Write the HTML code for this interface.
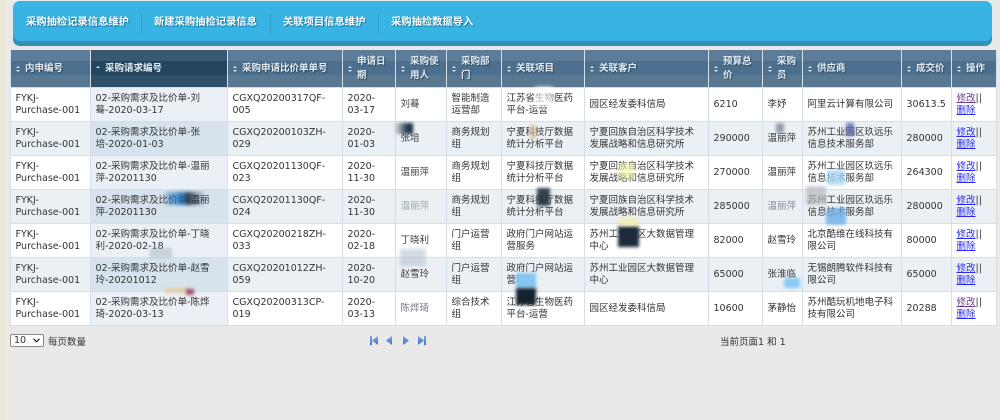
<!DOCTYPE html>
<html><head><meta charset="utf-8"><style>
html,body{margin:0;padding:0;width:1000px;height:420px;overflow:hidden;background:#e9e9e9;font-family:"DejaVu Sans","Noto Sans CJK SC",sans-serif;color:#333}
.strip{position:absolute;left:0;top:0;width:5px;height:420px;background:#ece8d8}
.nav{position:absolute;left:13px;top:1px;width:979px;height:45px;background:#37b3e4;border-radius:7px;box-shadow:inset 0 -5px 0 #3490b5;overflow:hidden}
.nav span{position:absolute;top:14.5px;font-size:10.3px;line-height:13px;font-weight:bold;color:#fff;white-space:nowrap;text-shadow:1px 1px 1px #1d7096;font-family:"Liberation Sans","Noto Sans CJK SC",sans-serif}
.nav b{position:absolute;top:13px;width:1px;height:19px;background:#2d9cc8}
table{position:absolute;left:10px;top:50px;width:986px;border-collapse:collapse;table-layout:fixed;font-size:9.5px;line-height:12.2px;filter:blur(.25px)}
tr:first-child th{height:37px}
th{padding:0 2px 0 14px;border:1px solid #d5dfe9;border-top:0;text-align:left;font-weight:bold;color:#e4ebf1;font-size:9.5px;line-height:13.5px;text-shadow:1px 1px 1px #2c4a62;position:relative;background:linear-gradient(#5c7c99 0,#5c7c99 30%,#4b6f8d 30%,#4b6f8d 68%,#587892 68%,#587892 100%)}
th.s{background:linear-gradient(#365870 0,#365870 30%,#234560 30%,#234560 68%,#2f5069 68%,#2f5069 100%)}
th i{position:absolute;left:5px;top:50%;margin-top:-3px;width:4px;height:6px}
th i:before,th i:after{content:"";position:absolute;left:0;border-left:2px solid transparent;border-right:2px solid transparent}
th i:before{top:0;border-bottom:2px solid #dfe7ee}
th i:after{bottom:0;border-top:2px solid #dfe7ee}
th.s i:after{display:none}
td{height:33px;padding:1px 2px 0 4.5px;border:1px solid #d5dfe9;white-space:nowrap;vertical-align:middle;background:#fff;overflow:hidden;box-sizing:border-box}
tr td{height:34px}
tr.e td{background:#ebf0f5}
td.s{background:#eaf0f5}
tr.e td.s{background:#d7e3ec}
a{color:#2a2aee;text-decoration:underline}
a.v{color:#6a3a9a}
.n{color:#3c3c3c}
.blob{position:absolute;filter:blur(1.5px)}
.sel{position:absolute;left:10px;top:334px;width:34px;height:13px;background:#fff;border:1px solid #8a8a8a;border-radius:2px;box-sizing:border-box;font-size:9.5px;line-height:11px;padding-left:3px}
.sel svg{position:absolute;right:3px;top:3px}
.t{position:absolute;font-size:9.5px;line-height:12px;white-space:nowrap;color:#333}
</style></head><body>
<div class="strip"></div>
<div class="nav">
<span style="left:13px">采购抽检记录信息维护</span><b style="left:128px"></b>
<span style="left:141px">新建采购抽检记录信息</span><b style="left:257px"></b>
<span style="left:270px">关联项目信息维护</span><b style="left:365px"></b>
<span style="left:378px">采购抽检数据导入</span>
</div>
<table>
<colgroup><col style="width:80px"><col style="width:137px"><col style="width:115px"><col style="width:53px"><col style="width:51px"><col style="width:55px"><col style="width:83px"><col style="width:124px"><col style="width:54px"><col style="width:40px"><col style="width:99px"><col style="width:50px"><col style="width:45px"></colgroup>
<tr><th><i></i>内申编号</th><th class="s"><i></i>采购请求编号</th><th><i></i>采购申请比价单单号</th><th><i></i>申请日<br>期</th><th><i></i>采购使<br>用人</th><th><i></i>采购部<br>门</th><th><i></i>关联项目</th><th><i></i>关联客户</th><th><i></i>预算总<br>价</th><th><i></i>采购<br>员</th><th><i></i>供应商</th><th><i></i>成交价</th><th><i></i>操作</th></tr>
<tr><td>FYKJ-<br>Purchase-001</td><td class="s">02-采购需求及比价单-刘<br>蓦-2020-03-17</td><td>CGXQ20200317QF-<br>005</td><td>2020-<br>03-17</td><td class="n">刘蓦</td><td>智能制造<br>运营部</td><td>江苏省生物医药<br>平台-运营</td><td>园区经发委科信局</td><td>6210</td><td>李妤</td><td>阿里云计算有限公司</td><td>30613.5</td><td><a class="v">修改</a>||<br><a>删除</a></td></tr>
<tr class="e"><td>FYKJ-<br>Purchase-001</td><td class="s">02-采购需求及比价单-张<br>培-2020-01-03</td><td>CGXQ20200103ZH-<br>029</td><td>2020-<br>01-03</td><td class="n">张培</td><td>商务规划<br>组</td><td>宁夏科技厅数据<br>统计分析平台</td><td>宁夏回族自治区科学技术<br>发展战略和信息研究所</td><td>290000</td><td>温丽萍</td><td>苏州工业园区玖远乐<br>信息技术服务部</td><td>280000</td><td><a>修改</a>||<br><a>删除</a></td></tr>
<tr><td>FYKJ-<br>Purchase-001</td><td class="s">02-采购需求及比价单-温丽<br>萍-20201130</td><td>CGXQ20201130QF-<br>023</td><td>2020-<br>11-30</td><td class="n">温丽萍</td><td>商务规划<br>组</td><td>宁夏科技厅数据<br>统计分析平台</td><td>宁夏回族自治区科学技术<br>发展战略和信息研究所</td><td>270000</td><td>温丽萍</td><td>苏州工业园区玖远乐<br>信息技术服务部</td><td>264300</td><td><a>修改</a>||<br><a>删除</a></td></tr>
<tr class="e"><td>FYKJ-<br>Purchase-001</td><td class="s">02-采购需求及比价单-温丽<br>萍-20201130</td><td>CGXQ20201130QF-<br>024</td><td>2020-<br>11-30</td><td class="n" style="color:#9aa">温丽萍</td><td>商务规划<br>组</td><td>宁夏科技厅数据<br>统计分析平台</td><td>宁夏回族自治区科学技术<br>发展战略和信息研究所</td><td>285000</td><td style="color:#889">温丽萍</td><td>苏州工业园区玖远乐<br>信息技术服务部</td><td>280000</td><td><a>修改</a>||<br><a>删除</a></td></tr>
<tr><td>FYKJ-<br>Purchase-001</td><td class="s">02-采购需求及比价单-丁晓<br>利-2020-02-18</td><td>CGXQ20200218ZH-<br>033</td><td>2020-<br>02-18</td><td class="n">丁晓利</td><td>门户运营<br>组</td><td>政府门户网站运<br>营服务</td><td>苏州工业园区大数据管理<br>中心</td><td>82000</td><td>赵雪玲</td><td>北京酷维在线科技有<br>限公司</td><td>80000</td><td><a>修改</a>||<br><a>删除</a></td></tr>
<tr class="e"><td>FYKJ-<br>Purchase-001</td><td class="s">02-采购需求及比价单-赵雪<br>玲-20201012</td><td>CGXQ20201012ZH-<br>059</td><td>2020-<br>10-20</td><td class="n">赵雪玲</td><td>门户运营<br>组</td><td>政府门户网站运<br>营服务</td><td>苏州工业园区大数据管理<br>中心</td><td>65000</td><td>张淮临</td><td>无锡朗腾软件科技有<br>限公司</td><td>65000</td><td><a>修改</a>||<br><a>删除</a></td></tr>
<tr><td>FYKJ-<br>Purchase-001</td><td class="s">02-采购需求及比价单-陈烨<br>琦-2020-03-13</td><td>CGXQ20200313CP-<br>019</td><td>2020-<br>03-13</td><td class="n" style="color:#778">陈烨琦</td><td>综合技术<br>组</td><td>江苏省生物医药<br>平台-运营</td><td>园区经发委科信局</td><td>10600</td><td>茅静怡</td><td>苏州酷玩机地电子科<br>技有限公司</td><td>20288</td><td><a class="v">修改</a>||<br><a>删除</a></td></tr>
</table>

<div class="blob" style="left:394px;top:123px;width:19px;height:11px;background:linear-gradient(90deg,rgba(255,255,255,0),#2a3f58 65%,#16263a)"></div>
<div class="blob" style="left:165px;top:192px;width:20px;height:13px;background:linear-gradient(90deg,rgba(40,120,190,.3),#1c6fb5)"></div>
<div class="blob" style="left:185px;top:192px;width:19px;height:13px;background:linear-gradient(90deg,#12263c,rgba(30,40,60,.1))"></div>
<div class="blob" style="left:537px;top:188px;width:13px;height:18px;background:#24303f;opacity:.9"></div>
<div class="blob" style="left:618px;top:226px;width:21px;height:21px;background:#1d2a3c"></div>
<div class="blob" style="left:516px;top:273px;width:20px;height:15px;background:#86c6f4"></div>
<div class="blob" style="left:516px;top:288px;width:20px;height:17px;background:#15222f"></div>
<div class="blob" style="left:776px;top:123px;width:8px;height:10px;background:#7c8896;opacity:.8"></div>
<div class="blob" style="left:846px;top:123px;width:8px;height:13px;background:#5a6aa8;opacity:.85"></div>
<div class="blob" style="left:827px;top:170px;width:18px;height:15px;background:#a9d5f6;opacity:.85"></div>
<div class="blob" style="left:826px;top:208px;width:20px;height:17px;background:#6fb2e8;opacity:.85"></div>
<div class="blob" style="left:806px;top:186px;width:20px;height:19px;background:#b4b8bd;opacity:.7"></div>
<div class="blob" style="left:619px;top:163px;width:15px;height:16px;background:#f7f3b0;opacity:.7"></div>
<div class="blob" style="left:619px;top:217px;width:20px;height:9px;background:#f4efb0;opacity:.8"></div>
<div class="blob" style="left:784px;top:278px;width:16px;height:10px;background:#8cc8f4"></div>
<div class="blob" style="left:165px;top:288px;width:22px;height:5px;background:#e8c89a;opacity:.8"></div>
<div class="blob" style="left:186px;top:289px;width:8px;height:6px;background:#8b2c4a;opacity:.8"></div>
<div class="blob" style="left:150px;top:248px;width:22px;height:10px;background:#aebdca;opacity:.6"></div>
<div class="blob" style="left:400px;top:249px;width:26px;height:17px;background:#b5c4d2;opacity:.6"></div>
<div class="blob" style="left:530px;top:125px;width:6px;height:14px;background:#dcb98c;opacity:.7"></div>
<div class="blob" style="left:535px;top:86px;width:18px;height:22px;background:#fff;opacity:.6"></div>

<div class="sel">10<svg width="7" height="5" viewBox="0 0 7 5"><path d="M0.5 0.8L3.5 3.8L6.5 0.8" fill="none" stroke="#222" stroke-width="1.2"/></svg></div>
<div class="t" style="left:48px;top:336.5px">每页数量</div>
<svg style="position:absolute;left:369px;top:335px" width="58" height="11" viewBox="0 0 58 11">
<defs><linearGradient id="g" x1="0" y1="0" x2="0" y2="1"><stop offset="0" stop-color="#7ba6e0"/><stop offset="1" stop-color="#3f75c8"/></linearGradient></defs>
<path d="M1 1H3V10H1Z M9 1V10L3 5.5Z" fill="url(#g)"/>
<path d="M23 1V10L17 5.5Z" fill="url(#g)"/>
<path d="M34 1V10L40 5.5Z" fill="url(#g)"/>
<path d="M49 1V10L55 5.5Z M55 1H57V10H55Z" fill="url(#g)"/>
</svg>
<div class="t" style="left:720px;top:336.5px">当前页面1 和 1</div>
</body></html>
